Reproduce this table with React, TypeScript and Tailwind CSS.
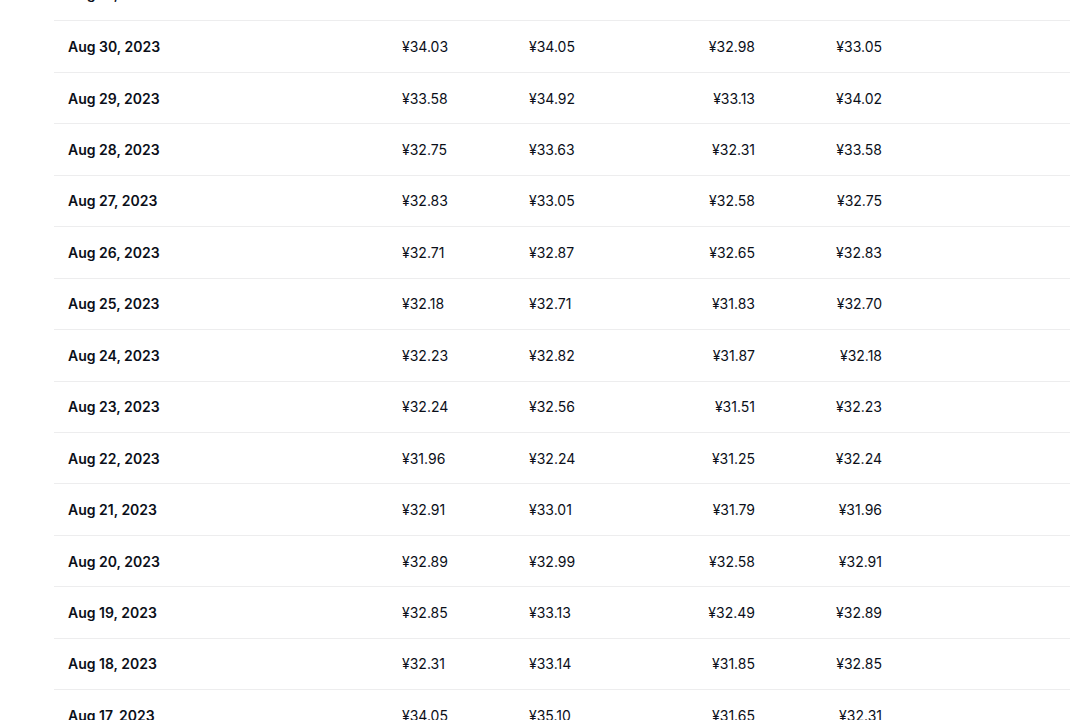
import React from "react";

const rows: [string, string, string, string, string][] = [
  ["Aug 31, 2023", "¥33.05", "¥33.90", "¥32.80", "¥33.52"],
  ["Aug 30, 2023", "¥34.03", "¥34.05", "¥32.98", "¥33.05"],
  ["Aug 29, 2023", "¥33.58", "¥34.92", "¥33.13", "¥34.02"],
  ["Aug 28, 2023", "¥32.75", "¥33.63", "¥32.31", "¥33.58"],
  ["Aug 27, 2023", "¥32.83", "¥33.05", "¥32.58", "¥32.75"],
  ["Aug 26, 2023", "¥32.71", "¥32.87", "¥32.65", "¥32.83"],
  ["Aug 25, 2023", "¥32.18", "¥32.71", "¥31.83", "¥32.70"],
  ["Aug 24, 2023", "¥32.23", "¥32.82", "¥31.87", "¥32.18"],
  ["Aug 23, 2023", "¥32.24", "¥32.56", "¥31.51", "¥32.23"],
  ["Aug 22, 2023", "¥31.96", "¥32.24", "¥31.25", "¥32.24"],
  ["Aug 21, 2023", "¥32.91", "¥33.01", "¥31.79", "¥31.96"],
  ["Aug 20, 2023", "¥32.89", "¥32.99", "¥32.58", "¥32.91"],
  ["Aug 19, 2023", "¥32.85", "¥33.13", "¥32.49", "¥32.89"],
  ["Aug 18, 2023", "¥32.31", "¥33.14", "¥31.85", "¥32.85"],
  ["Aug 17, 2023", "¥34.05", "¥35.10", "¥31.65", "¥32.31"],
  ["Aug 16, 2023", "¥33.80", "¥34.20", "¥33.10", "¥34.05"],
];

export default function App() {
  return (
    <div
      className="w-[1070px] h-[720px] overflow-hidden bg-white text-[#0b0f19]"
      style={{ fontFamily: "Inter, 'Noto Sans', sans-serif" }}
    >
      <div className="ml-[54px] mt-[-32px]">
        {rows.map((r, i) => (
          <div
            key={r[0]}
            className={
              i === 0
                ? "flex items-center h-[53.45px] pb-[2px] border-b border-[#ededee] text-[14px]"
                : "flex items-center h-[51.45px] border-b border-[#ededee] text-[14px]"
            }
          >
            <div className="w-[348px] pl-[14px] font-semibold">{r[0]}</div>
            <div className="w-[127px]">{r[1]}</div>
            <div className="w-[100px]">{r[2]}</div>
            <div className="w-[126px] text-right">{r[3]}</div>
            <div className="w-[127px] text-right">{r[4]}</div>
            <div className="flex-1" />
          </div>
        ))}
      </div>
    </div>
  );
}
